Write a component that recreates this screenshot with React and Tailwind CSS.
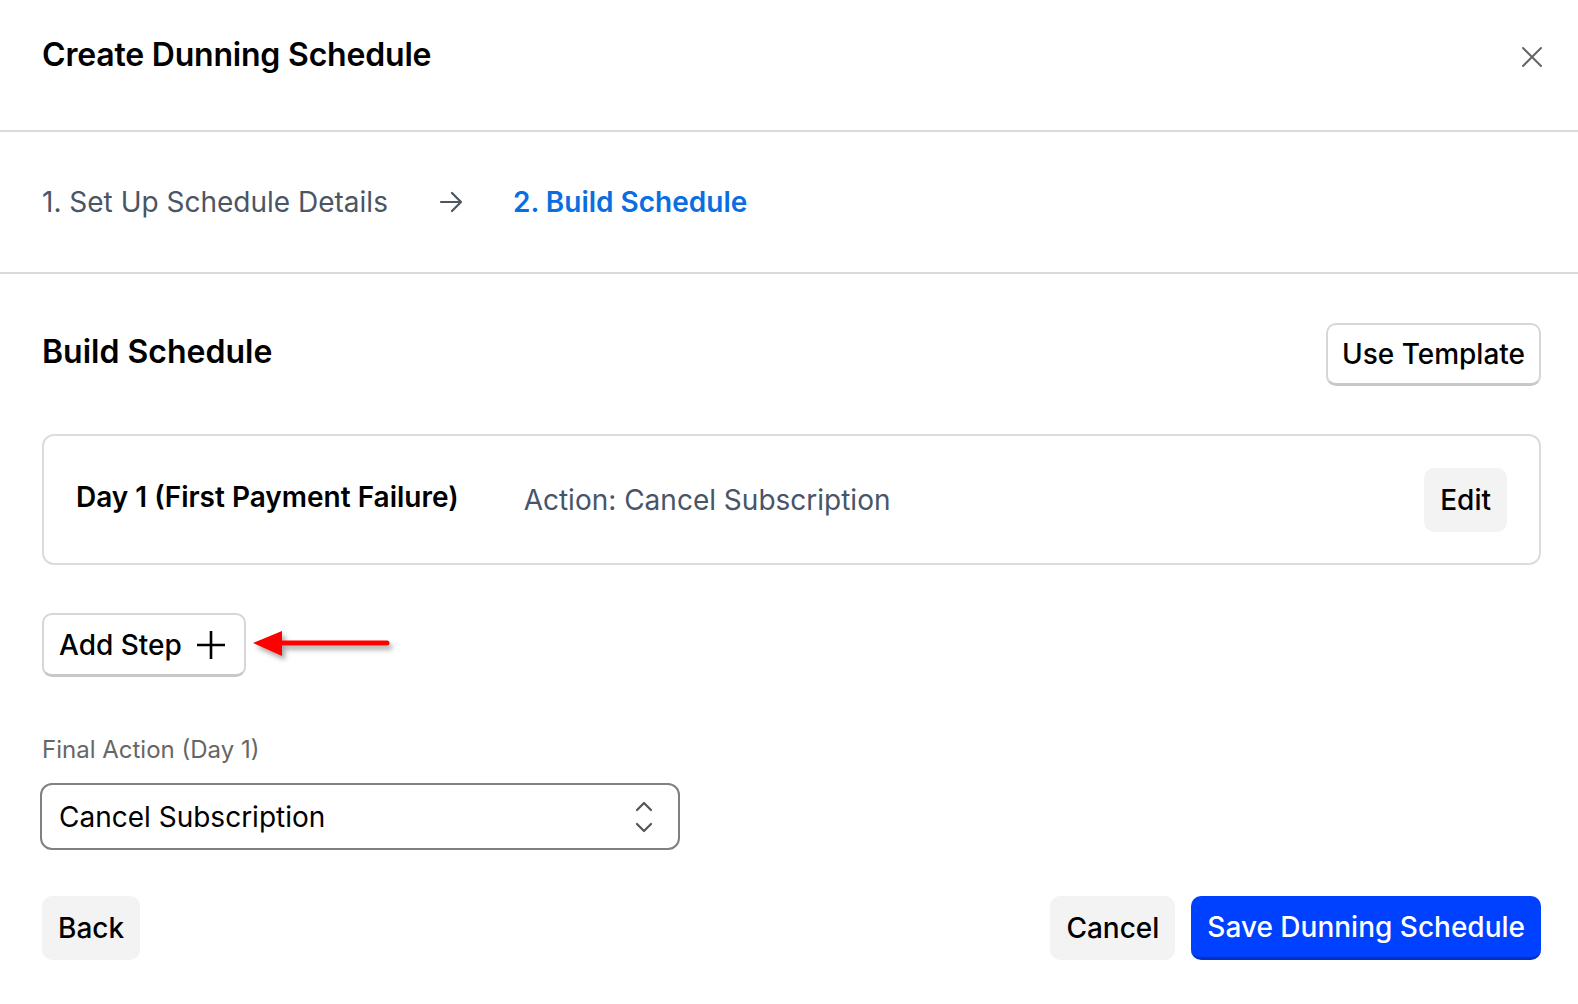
import React, { useState } from 'react';

const font = { fontFamily: 'Inter, "Noto Sans", sans-serif' };

const RedArrow = () => (
  <svg width="150" height="44" viewBox="0 0 150 44" className="-ml-[1px]">
    <defs>
      <filter id="arrowShadow" x="-20%" y="-50%" width="140%" height="200%">
        <feDropShadow dx="3" dy="4" stdDeviation="2.5" floodColor="#000" floodOpacity="0.35" />
      </filter>
    </defs>
    <g filter="url(#arrowShadow)">
      <line x1="30" y1="20" x2="142" y2="20" stroke="#ff0000" strokeWidth="5" strokeLinecap="round" />
      <polygon points="8,20 37,8 37,33" fill="#ff0000" />
    </g>
  </svg>
);

const App = () => {
  const [finalAction, setFinalAction] = useState('Cancel Subscription');

  return (
    <div className="min-h-screen w-full bg-white text-black" style={font}>
      {/* Header */}
      <div className="flex items-center justify-between h-[132px] pl-[42px] pr-[33px] border-b-2 border-[#dadada]">
        <h1 className="text-[32px] font-semibold tracking-[-0.2px] -mt-[20px]">Create Dunning Schedule</h1>
        <button className="text-[#666] -mt-[16px]">
          <svg width="26" height="26" viewBox="0 0 26 26" fill="none" stroke="currentColor" strokeWidth="2" strokeLinecap="round">
            <path d="M4 4 L22 22 M22 4 L4 22" />
          </svg>
        </button>
      </div>

      {/* Steps */}
      <div className="flex items-center h-[142px] pl-[42px] border-b-2 border-[#dadada] text-[28px]">
        <span className="text-[#4b5563]">1. Set Up Schedule Details</span>
        <svg width="24" height="24" viewBox="0 0 24 24" fill="none" stroke="#4b5563" strokeWidth="2.2" strokeLinecap="round" strokeLinejoin="round" className="ml-[51px] mr-[50px]">
          <path d="M2 12h20M13 3l9 9-9 9" />
        </svg>
        <span className="text-[#0b6ee0] font-semibold">2. Build Schedule</span>
      </div>

      {/* Body */}
      <div className="pl-[42px] pr-[37px] pt-[49px]">
        <div className="flex items-center justify-between">
          <h2 className="text-[32px] font-semibold -mt-[6px]">Build Schedule</h2>
          <button className="h-[63px] px-[14px] rounded-[10px] border-2 border-[#d6d6d6] border-b-[3px] border-b-[#c8c8c8] text-[28px] font-medium bg-white">
            Use Template
          </button>
        </div>

        {/* Step card */}
        <div className="mt-[48px] h-[131px] flex items-center justify-between rounded-[12px] border-2 border-[#dcdcdc] pl-[32px] pr-[32px]">
          <div className="flex items-center">
            <span className="text-[28px] font-semibold -mt-[6px]">Day 1 (First Payment Failure)</span>
            <span className="ml-[65px] text-[28px] text-[#475569]">Action: Cancel Subscription</span>
          </div>
          <button className="h-[64px] px-[16px] rounded-[10px] bg-[#f3f3f3] text-[28px] font-medium">Edit</button>
        </div>

        {/* Add step */}
        <div className="mt-[48px] flex items-center">
          <button className="h-[64px] flex items-center gap-[14px] pl-[15px] pr-[18px] rounded-[10px] border-2 border-[#d6d6d6] border-b-[3px] border-b-[#c8c8c8] text-[28px] font-medium bg-white">
            Add Step
            <svg width="30" height="30" viewBox="0 0 30 30" fill="none" stroke="#000" strokeWidth="2.6">
              <path d="M1 15h28M15 1v28" />
            </svg>
          </button>
          <RedArrow />
        </div>

        {/* Final action */}
        <div className="mt-[55px] text-[24px] text-[#666]">Final Action (Day 1)</div>
        <div className="mt-[15px] -ml-[2px] w-[640px] h-[67px] flex items-center justify-between rounded-[12px] border-2 border-[#808080] pl-[17px] pr-[22px]">
          <span className="text-[28px]">{finalAction}</span>
          <svg width="24" height="36" viewBox="0 0 24 36" fill="none" stroke="#555" strokeWidth="2.2" strokeLinecap="round" strokeLinejoin="round" onClick={() => setFinalAction('Cancel Subscription')}>
            <path d="M5 11l7-7 7 7M5 25l7 7 7-7" />
          </svg>
        </div>

        {/* Footer */}
        <div className="mt-[46px] flex items-center justify-between">
          <button className="h-[64px] px-[16px] rounded-[10px] bg-[#f3f3f3] text-[28px] font-medium">Back</button>
          <div className="flex items-center gap-[16px]">
            <button className="h-[64px] px-[16px] rounded-[10px] bg-[#f3f3f3] text-[28px] font-medium">Cancel</button>
            <button className="h-[64px] px-[16px] rounded-[10px] bg-[#0040ff] border-b-[3px] border-[#0031c4] text-white text-[28px] font-medium">
              Save Dunning Schedule
            </button>
          </div>
        </div>
      </div>
    </div>
  );
};

export default App;
